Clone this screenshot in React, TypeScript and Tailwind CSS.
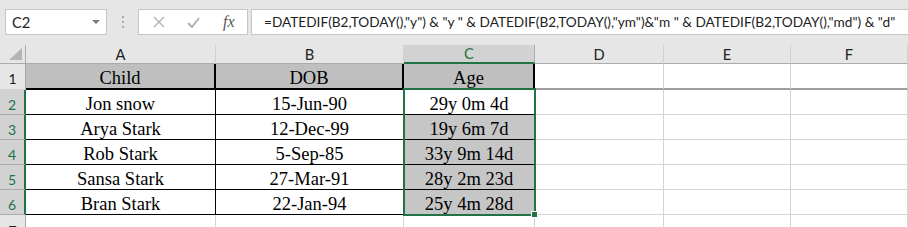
import React from 'react';

const rows = [
  { n: 2, child: 'Jon snow', dob: '15-Jun-90', age: '29y 0m 4d' },
  { n: 3, child: 'Arya Stark', dob: '12-Dec-99', age: '19y 6m 7d' },
  { n: 4, child: 'Rob Stark', dob: '5-Sep-85', age: '33y 9m 14d' },
  { n: 5, child: 'Sansa Stark', dob: '27-Mar-91', age: '28y 2m 23d' },
  { n: 6, child: 'Bran Stark', dob: '22-Jan-94', age: '25y 4m 28d' },
];

const ui = 'font-[Lato,Liberation_Sans,sans-serif]';
const serif = 'font-[Liberation_Serif,Times_New_Roman,serif]';
const cellText = `flex items-end justify-center text-[18.5px] leading-[20px] text-black ${serif}`;
const rowHead = 'flex items-end justify-center text-[14px] leading-[17px]';

export default function App() {
  return (
    <div className={`w-[908px] h-[227px] overflow-hidden bg-[#e6e6e6] flex flex-col ${ui}`}>
      {/* Formula bar */}
      <div className="h-[45px] shrink-0 flex items-start pt-[9px] pl-[5px]">
        <div className="w-[102px] h-[26px] bg-white border border-[#c6c6c6] flex items-center pl-[6px] pr-[6px] text-[14.7px] text-[#222]">
          <span className="flex-1">C2</span>
          <span className="w-0 h-0 border-l-[4px] border-r-[4px] border-t-[4px] border-l-transparent border-r-transparent border-t-[#7a7a7a]" />
        </div>
        <div className="w-[31px] h-[26px] flex flex-col items-center justify-center gap-[3px]">
          <span className="w-[2px] h-[2px] bg-[#a8a8a8]" />
          <span className="w-[2px] h-[2px] bg-[#a8a8a8]" />
          <span className="w-[2px] h-[2px] bg-[#a8a8a8]" />
        </div>
        <div className="w-[110px] h-[26px] bg-white border border-[#c6c6c6] flex items-center">
          <svg width="12" height="12" viewBox="0 0 12 12" className="ml-[14px]">
            <path d="M1 1 L11 11 M11 1 L1 11" stroke="#b0b0b0" strokeWidth="1.3" fill="none" />
          </svg>
          <svg width="13" height="11" viewBox="0 0 13 11" className="ml-[22px]">
            <path d="M1 6 L5 10 L12 1" stroke="#b0b0b0" strokeWidth="2" fill="none" />
          </svg>
          <span className={`ml-[23px] italic text-[16px] text-[#555] ${serif}`}>fx</span>
        </div>
        <div className="ml-[3px] flex-1 h-[26px] bg-white border border-r-0 border-[#c6c6c6] flex items-center pl-[12px] text-[13.65px] text-[#222] whitespace-nowrap overflow-hidden">
          =DATEDIF(B2,TODAY(),"y") &amp; "y " &amp; DATEDIF(B2,TODAY(),"ym")&amp;"m " &amp; DATEDIF(B2,TODAY(),"md") &amp; "d"
        </div>
      </div>

      {/* Sheet */}
      <div className="relative flex-1 bg-white">
        <div className="grid grid-cols-[26px_190px_188px_131px_129px_127px_1fr] grid-rows-[19px_26px_25px_25px_25px_25px_25px_25px] text-[14.7px]">
          {/* column header row */}
          <div className="relative bg-[#e6e6e6] border-r border-b border-[#ababab]">
            <svg width="13" height="12" viewBox="0 0 13 12" className="absolute right-[3px] bottom-[3px]">
              <path d="M13 0 L13 12 L0 12 Z" fill="#b4b4b4" />
            </svg>
          </div>
          {['A', 'B'].map((c) => (
            <div key={c} className="bg-[#e6e6e6] border-r border-r-[#d0d0d0] border-b border-b-[#ababab] flex items-center justify-center text-[#222]">
              {c}
            </div>
          ))}
          <div className="bg-[#d2d2d2] border-r border-r-[#ababab] border-b-2 border-b-[#217346] flex items-center justify-center text-[#217346]">
            C
          </div>
          {['D', 'E', 'F'].map((c) => (
            <div key={c} className="bg-[#e6e6e6] border-r border-r-[#d0d0d0] border-b border-b-[#ababab] flex items-center justify-center text-[#222]">
              {c}
            </div>
          ))}

          {/* row 1 */}
          <div className={`bg-[#e6e6e6] border-r border-r-[#ababab] border-b border-b-[#d0d0d0] pb-[2px] text-[#222] ${rowHead}`}>
            1
          </div>
          {['Child', 'DOB', 'Age'].map((h) => (
            <div key={h} className={`bg-[#bfbfbf] border-r-2 border-b-2 border-black ${cellText}`}>
              {h}
            </div>
          ))}
          {[0, 1, 2].map((i) => (
            <div key={i} className="border-r border-r-[#d4d4d4] border-b-2 border-b-[#9e9e9e]" />
          ))}

          {/* data rows */}
          {rows.map((r) => (
            <React.Fragment key={r.n}>
              <div className={`bg-[#d2d2d2] border-r-2 border-r-[#217346] border-b border-b-[#ababab] pb-[1px] text-[#217346] ${rowHead}`}>
                {r.n}
              </div>
              <div className={`border-r border-b border-black ${cellText}`}>{r.child}</div>
              <div className={`border-r border-b border-black ${cellText}`}>{r.dob}</div>
              <div className={`${r.n === 2 ? 'bg-white' : 'bg-[#c6c6c6]'} border-r border-b border-black ${cellText}`}>
                {r.age}
              </div>
              {[0, 1, 2].map((i) => (
                <div key={i} className="border-r border-b border-[#d4d4d4]" />
              ))}
            </React.Fragment>
          ))}

          {/* row 7 */}
          <div className={`bg-[#e6e6e6] border-r border-r-[#ababab] pb-[1px] text-[#222] ${rowHead}`}>
            7
          </div>
          {[0, 1, 2, 3, 4, 5].map((i) => (
            <div key={i} className="border-r border-[#d4d4d4]" />
          ))}
        </div>

        {/* selection C2:C6 */}
        <div className="absolute left-[403px] top-[43px] w-[133px] h-[128px] border-2 border-[#217346] pointer-events-none" />
        <div className="absolute left-[531px] top-[166px] w-[7px] h-[7px] bg-[#217346] border border-white" />
      </div>
    </div>
  );
}
